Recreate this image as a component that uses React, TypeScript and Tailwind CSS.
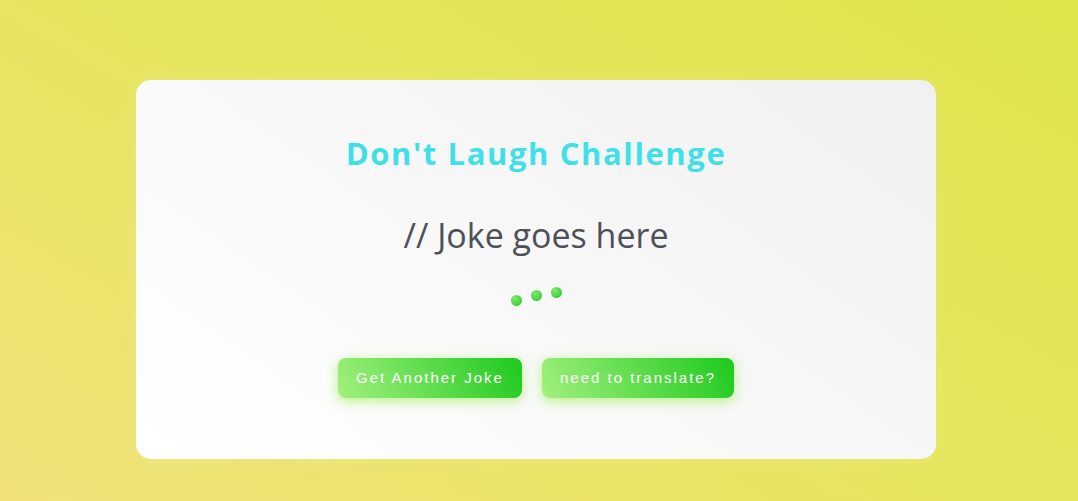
export default function App() {
  const dots = [
    { offset: 'mt-[8px]' },
    { offset: 'mt-[3px]' },
    { offset: 'mt-0' },
  ];

  return (
    <div className="w-full h-[501px] overflow-hidden bg-[linear-gradient(30deg,#f0e279_0%,#e6e55e_50%,#dee54a_100%)] flex justify-center pt-[80px] pr-[6px]">
      {/* Card */}
      <div className="w-[800px] h-[379px] rounded-[15px] bg-[linear-gradient(35deg,#ffffff_0%,#f0f0f0_100%)] flex flex-col items-center shadow-[0_0_20px_rgba(255,255,255,0.15)]">
        <h1
          className="mt-[53px] text-[31px] leading-[40px] font-bold tracking-[1.6px] text-[#3fe0e7]"
          style={{ fontFamily: '"Open Sans", "Noto Sans", sans-serif' }}
        >
          Don't Laugh Challenge
        </h1>

        <p
          className="mt-[39px] text-[34px] leading-[46px] font-normal text-[#4d5059]"
          style={{ fontFamily: '"Open Sans", "Noto Sans", sans-serif' }}
        >
          // Joke goes here
        </p>

        {/* Loading dots */}
        <div className="mt-[29px] h-[16px] flex gap-[9px] items-start">
          {dots.map((d, i) => (
            <span
              key={i}
              className={`${d.offset} w-[11px] h-[11px] rounded-full bg-[radial-gradient(circle_at_35%_30%,#7ee86a,#2cc62c)]`}
            />
          ))}
        </div>

        {/* Buttons */}
        <div className="mt-[55px] flex gap-[20px]">
          <button
            className="w-[184px] h-[40px] rounded-[8px] bg-[linear-gradient(60deg,#a3f07e_0%,#1dc91d_100%)] text-white text-[15px] tracking-[2px] shadow-[0_3px_12px_rgba(170,240,110,0.85)]"
            style={{ fontFamily: '"Liberation Sans", Arial, sans-serif' }}
          >
            Get Another Joke
          </button>
          <button
            className="w-[192px] h-[40px] rounded-[8px] bg-[linear-gradient(60deg,#a3f07e_0%,#1dc91d_100%)] text-white text-[15px] tracking-[2px] shadow-[0_3px_12px_rgba(170,240,110,0.85)]"
            style={{ fontFamily: '"Liberation Sans", Arial, sans-serif' }}
          >
            need to translate?
          </button>
        </div>
      </div>
    </div>
  );
}
